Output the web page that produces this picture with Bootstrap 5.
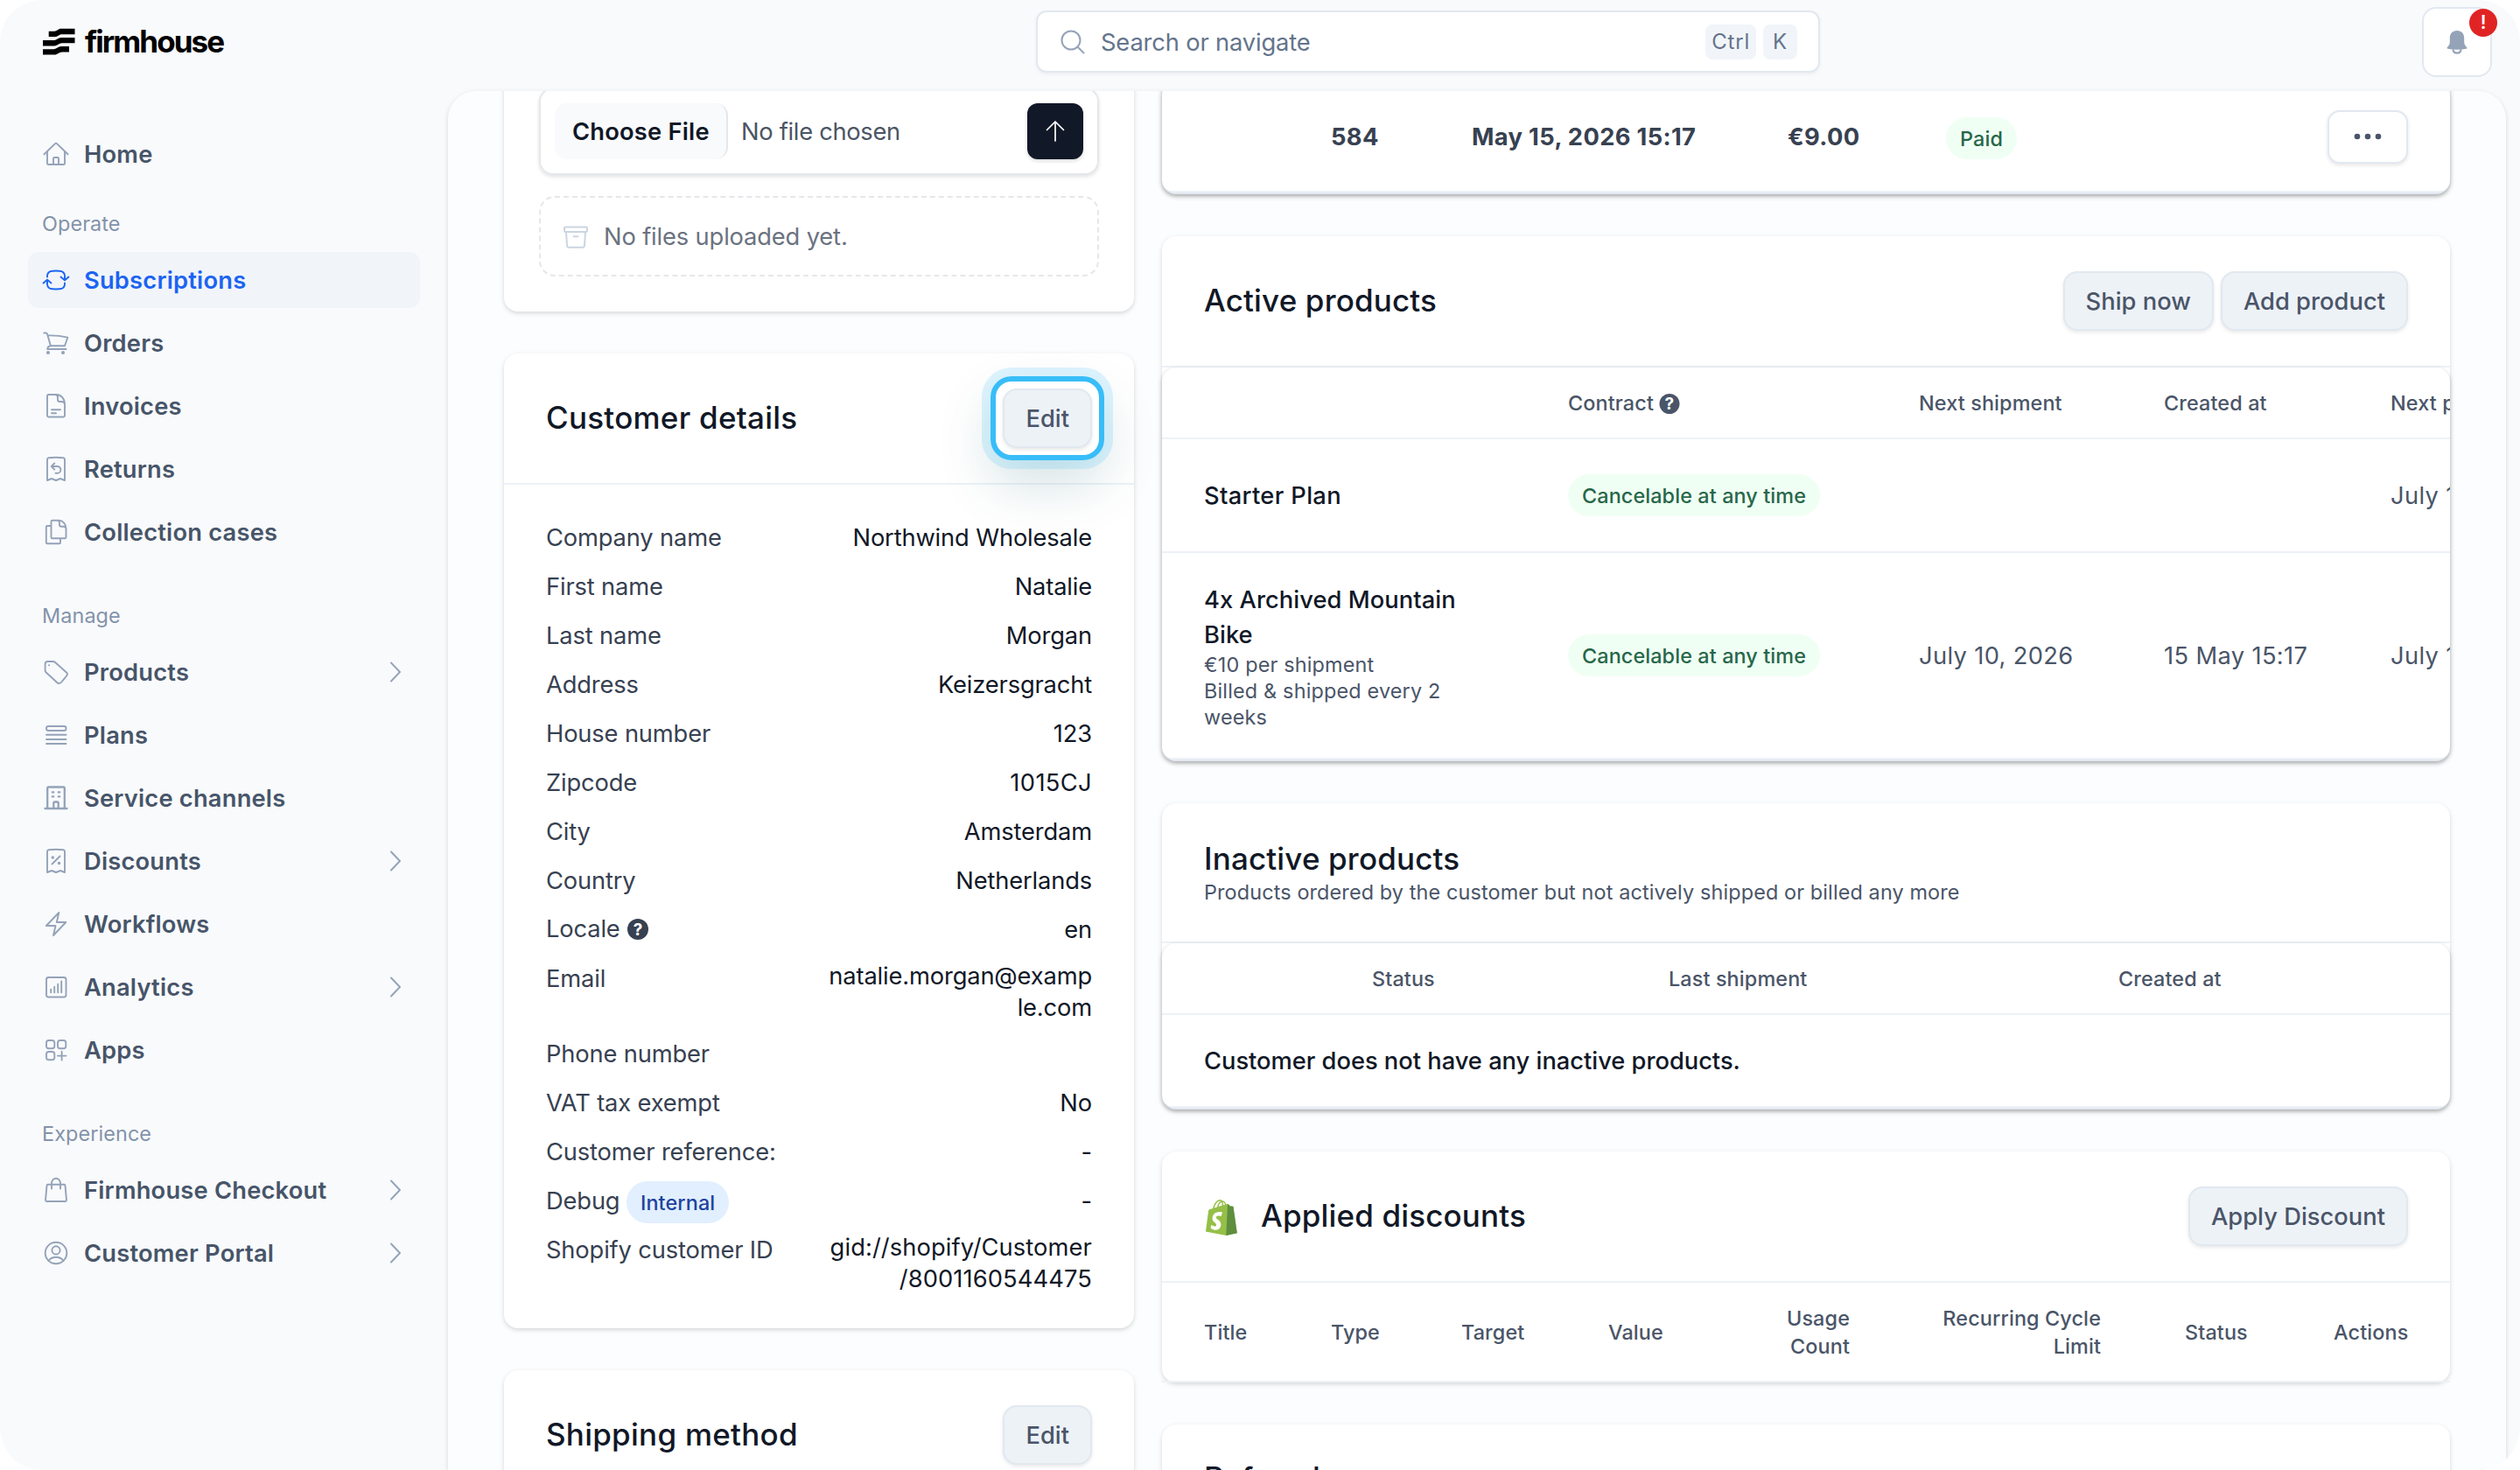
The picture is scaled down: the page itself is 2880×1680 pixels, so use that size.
<!DOCTYPE html>
<html lang="en">
<head>
<meta charset="utf-8">
<meta name="viewport" content="width=device-width, initial-scale=1">
<title>Firmhouse - Subscription</title>
<link rel="stylesheet" href="https://cdn.jsdelivr.net/npm/bootstrap@5.3.0/dist/css/bootstrap.min.css">
<style>
  body { font-family: Inter, "Liberation Sans", sans-serif; font-size: 27.3px; line-height: 40px; letter-spacing: -.15px; color: #111827; background: #fff; overflow: hidden; }
  .app-window { width: 2880px; height: 1680px; border-radius: 48px; background: #f9fafc; }

  .topbar { height: 104px; }
  .brand { width: 512px; padding: 32px 0 0 49px; gap: 11px; }
  .brand-name { font-size: 35px; font-weight: 700; line-height: 30px; letter-spacing: -1.95px; color: #000; }
  .search-box { width: 896px; height: 71px; margin: 12px 0 0 672px; padding: 0 24px 0 26px; border: 2px solid #e2e8f0; border-radius: 12px; background: #fff; color: #64748b; box-shadow: 0 2px 4px rgba(0,0,0,.05); }
  .search-hint { padding: 2px 0 0 18px; }
  .key-cap { height: 40px; border-radius: 8px; background: #f1f5f9; font-size: 24px; padding: 0 7px; letter-spacing: .8px; line-height: 40px; }
  .key-cap.single { padding: 0 11px; }
  .bell-btn { width: 80px; height: 80px; margin: 8px 32px 0 0; border: 2px solid #e2e8f0; border-radius: 16px; background: #fff; }
  .alert-dot { top: 0; right: -8px; width: 32px; height: 32px; border-radius: 50%; background: #e02424; color: #fff; font-size: 21px; font-weight: 600; line-height: 32px; letter-spacing: 0; }

  .side-menu { width: 512px; padding: 40px 32px 0; }
  .side-link { height: 64px; margin-bottom: 8px; padding: 2px 22px 0 16px; border-radius: 12px; color: #475569; font-weight: 600; letter-spacing: .2px; gap: 16px; }
  .side-link.active { background: #f1f5fa; color: #1c64f2; }
  .side-link svg { fill: none; stroke: #94a3b8; stroke-width: 1.9; stroke-linecap: round; stroke-linejoin: round; flex: none; margin-top: -2px; }
  .side-link.active svg { stroke: #1c64f2; }
  .side-label { font-size: 23.4px; line-height: 32px; letter-spacing: .1px; color: #8393aa; padding-left: 16px; margin: 48px 0 16px; }
  .side-label.first { margin-top: 32px; }

  .page-panel { width: 2352px; height: 1576px; border-radius: 32px 32px 0 0; background: #fcfdfe; box-shadow: 0 2px 6px rgba(0,0,0,.1), 0 2px 4px rgba(0,0,0,.05); }
  .scrolled { margin-top: -44px; padding: 0 64px; gap: 32px; }
  .col-side { width: 720px; }
  .col-main { width: 1472px; }

  .panel-card { background: #fff; border-radius: 16px; margin-bottom: 48px; box-shadow: 0 2px 6px rgba(0,0,0,.1), 0 2px 4px rgba(0,0,0,.06); }
  .files-card { padding: 40px; }
  .panel-head { padding: 40px 48px; border-bottom: 2px solid #edf2f7; }
  .panel-title { font-size: 35px; font-weight: 500; line-height: 44px; letter-spacing: .15px; margin: -1px 0 1px; color: #111827; }
  .panel-title.tall { line-height: 46px; margin: 0; }
  .col-side .panel-title { letter-spacing: .25px; }
  .panel-sub { font-size: 23.4px; line-height: 32px; letter-spacing: .13px; color: #4a5568; }
  .soft-btn { height: 68px; padding: 0 24px; border: 2px solid #e2e8f0; border-radius: 16px; background: #edf2f7; color: #4a5568; font-size: 27.3px; font-weight: 500; line-height: 66px; letter-spacing: .02px; box-shadow: 0 2px 4px rgba(0,0,0,.09); }

  .file-row { height: 100px; padding: 16px; border: 2px solid #e5e7eb; border-radius: 16px; box-shadow: 0 2px 4px rgba(0,0,0,.12); }
  .choose-btn { height: 64px; width: 198px; padding-left: 20px; border-right: 2px solid #e5e7eb; border-radius: 14px; background: #f9fafc; font-weight: 600; line-height: 66px; letter-spacing: .2px; }
  .file-name { padding: 2px 0 0 15px; color: #4b5563; letter-spacing: -.3px; }
  .upload-btn { width: 64px; height: 64px; border-radius: 12px; background: #111827; box-shadow: 0 2px 4px rgba(0,0,0,.15); }
  .empty-box { height: 92px; margin-top: 24px; padding: 2px 0 0 26px; border: 2px dashed #e5e7eb; border-radius: 18px; color: #6b7280; gap: 18px; }

  .spotlight::after { content: ""; position: absolute; inset: -14px; border: 6px solid #38bdf8; border-radius: 24px; box-shadow: 0 0 0 10px rgba(56,189,248,.17), 0 28px 60px rgba(12,90,100,.17); z-index: 2; }

  .detail-list { padding: 40px 48px; margin: 0; }
  .detail-row { margin-bottom: 16px; line-height: 42px; height: 40px; }
  .detail-row.double { height: 70px; }
  .detail-row:last-child { margin-bottom: 0; }
  .detail-row dt { font-weight: 400; color: #374151; white-space: nowrap; height: 40px; }
  .detail-row dd { margin: 0; text-align: right; }
  .detail-row.double dd { line-height: 36px; width: 304px; }
  .tight { letter-spacing: .1px; }
  .num { letter-spacing: .35px; }
  .tag { display: inline-block; height: 48px; padding: 0 16px; border-radius: 24px; font-size: 23.4px; font-weight: 500; line-height: 49px; letter-spacing: .1px; }
  .tag-info { background: #e1effe; color: #1e429f; margin-top: -2px; padding: 0 15.500px; }
  .tag-ok { background: #f0fff4; color: #276749; }
  .row-plan .tag-ok, .row-bike .tag-ok { margin-top: -2px; }
  .tag-paid { margin-top: 2px; }

  .inner-sheet { border-radius: 16px; border-bottom: 2px solid #e2e8f0; background: #fff; overflow: hidden; box-shadow: 0 2px 6px rgba(0,0,0,.12), 0 2px 4px rgba(0,0,0,.12); }
  .orders-card { padding-top: 34px; }
  .grid-sheet.table { table-layout: fixed; border-collapse: separate; border-spacing: 0; margin: 0; color: #4a5568; --bs-table-bg: transparent; }
  .grid-sheet.table > :not(caption) > * > * { padding: 2px 48px 0; border-width: 0 0 2px; border-color: #edf2f7; vertical-align: middle; color: inherit; background: none; }
  .grid-sheet.table > :not(caption) > * > .strong-name, .strong-name { color: #111827; font-weight: 500; letter-spacing: .05px; }
  .grid-sheet.table > :not(caption) > * > .plan-name { letter-spacing: .35px; }
  .grid-sheet.table > :not(caption) > * > .none-text { letter-spacing: -.02px; }
  .grid-sheet th { font-size: 23.4px; font-weight: 500; line-height: 32px; letter-spacing: .12px; height: 82px; }
  .grid-sheet .row-a { height: 126px; font-weight: 700; color: #374151; letter-spacing: .35px; }
  .grid-sheet .row-plan { height: 130px; }
  .grid-sheet .row-bike { height: 236px; }
  .grid-sheet .row-none { height: 106px; }
  .grid-sheet .row-disc th { height: 114px; }
  .fine { font-size: 23.4px; line-height: 30px; letter-spacing: .18px; margin-top: -1px; }
  .dots-btn { width: 92px; height: 61px; border: 2px solid #e2e8f0; border-radius: 14px; box-shadow: 0 2px 4px rgba(0,0,0,.1); background: #fff; margin-top: -2px; }
  .shop-logo { margin: 3px 27px 0 2px; }
  .th-help { gap: 6px; }
  .c145{width:145px}.c161{width:161px}.c361{width:361px}.c181{width:181px}.c300{width:300px}
  .c416{width:416px}.c401{width:401px}.c280{width:280px}.c259{width:259px}
  .c192{width:192px}.c339{width:339px}.c514{width:514px}
  .c149{width:149px}.c168{width:168px}.c196{width:196px}.c176{width:176px}.c287{width:287px}.c170{width:170px}
  .q-mark { font: 700 19px Inter, sans-serif; fill: #fff; }
</style>
<script src="https://cdn.jsdelivr.net/npm/bootstrap@5.3.0/dist/js/bootstrap.bundle.min.js"></script>
</head>
<body>
<div class="app-window overflow-hidden">
  <header class="topbar d-flex align-items-start">
    <div class="brand d-flex">
      <svg width="37" height="31" viewBox="0 0 37 31" fill="#000">
        <path d="M6.700 3.700H13C16.500 3.700 17 .8 21 .8H36.500V7.200H22C18 7.200 17.500 10.100 13 10.100H6.700Z"/>
        <path d="M0 14H12C16.500 14 17 10.900 21 10.900H36.500V17.300H22C18 17.300 17.500 20.400 13 20.400H0Z"/>
        <path d="M0 24.200H12C16.500 24.200 17 21.100 21 21.100H30V27.500H22C18 27.500 17.500 30.600 13 30.600H0Z"/>
      </svg>
      <span class="brand-name">firmhouse</span>
    </div>
    <div class="search-box d-flex align-items-center">
      <svg width="28" height="28" viewBox="0 0 28 28" fill="none" stroke="#94a3b8" stroke-width="2" stroke-linecap="round"><circle cx="12" cy="12" r="10.500"/><path d="M19.500 19.500L26.500 26.500"/></svg>
      <span class="search-hint flex-grow-1">Search or navigate</span>
      <span class="key-cap">Ctrl</span>
      <span class="key-cap single ms-2">K</span>
    </div>
    <div class="bell-btn ms-auto position-relative d-flex align-items-center justify-content-center">
      <svg width="26" height="28" viewBox="0 0 26 28"><path d="M13 1C7.500 1 4.800 4.800 4.800 9.500V14C4.800 17 3.300 18.600 1.700 20.200Q1 21.500 2.500 21.800Q13 23.800 23.500 21.800Q25 21.500 24.300 20.200C22.700 18.600 21.200 17 21.200 14V9.500C21.200 4.800 18.500 1 13 1Z" fill="#94a3b8"/><path d="M8.500 22.300C9 28 17 28 17.500 22.300" fill="none" stroke="#94a3b8" stroke-width="2.200"/></svg>
      <span class="alert-dot position-absolute text-center">!</span>
    </div>
  </header>

  <div class="d-flex">
    <nav class="side-menu">
      <a class="side-link d-flex align-items-center text-decoration-none mb-0"><svg width="32" height="32"><path d="M2.500 16.300L14.800 4.400Q16 3.300 17.200 4.400L29.500 16.300M6 13.200V26.700Q6 28 7.300 28H24.700Q26 28 26 26.700V13.200M13 28V21.200Q13 20 14.200 20H17.800Q19 20 19 21.200V28"/></svg>Home</a>
      <div class="side-label first">Operate</div>
      <a class="side-link active d-flex align-items-center text-decoration-none"><svg width="32" height="32"><path d="M6 12.500V11Q6.500 6 12 5.700Q16 5.400 20 5.700Q25.500 6 26 11V16.200M26 19.500V21Q25.500 26 20 26.300Q16 26.600 12 26.300Q6.500 26 6 21V15.800M1.600 19.500L6 15.600L10.500 19.500M21.500 12.500L26 16.400L30.400 12.500"/></svg>Subscriptions</a>
      <a class="side-link d-flex align-items-center text-decoration-none"><svg width="32" height="32"><path d="M2.300 4.500H4.300Q5.700 4.500 6.100 5.900L9.900 19.200H26L29.300 9.700Q18 7 6.800 7.400M9.900 19.200Q6.500 19.500 6.200 23H27.500"/><circle cx="7" cy="27" r="1.100" fill="#94a3b8"/><circle cx="24" cy="27" r="1.100" fill="#94a3b8"/></svg>Orders</a>
      <a class="side-link d-flex align-items-center text-decoration-none"><svg width="32" height="32"><path d="M17 3H7.500Q6 3 6 4.500V27Q6 28.500 7.500 28.500H24.500Q26 28.500 26 27V14C26 7.500 22 3 16 3M15.500 3Q18 3.500 18 6.500V8.700Q18 11 20.300 11H22.500Q25.500 11 26 14M11 20.200H21M11 24.200H16"/></svg>Invoices</a>
      <a class="side-link d-flex align-items-center text-decoration-none"><svg width="32" height="32"><path d="M6 29V5Q6 3.500 7.500 3.200Q16 2.300 24.500 3.200Q26 3.500 26 5V29L21 27L16 29L11 27ZM14.200 9.500L10.700 13L14.200 16.500M10.700 13H17.500A3.900 3.900 0 0 1 17.500 20.800H15.500"/></svg>Returns</a>
      <a class="side-link d-flex align-items-center text-decoration-none"><svg width="32" height="32"><path d="M10.500 9H6.300Q4.800 9 4.800 10.500V28Q4.800 29.300 6.300 29.300H19.700Q21 29.300 21 28V23.300M19 2.800H12Q10.500 2.800 10.500 4.300V22Q10.500 23.300 12 23.300H26Q27.500 23.300 27.500 22V12C27.500 7 24 2.800 19 2.800M18.500 2.900Q20 3.800 20 6V7.700Q20 9.700 22 9.700H24.500Q27 9.700 27.500 12"/></svg>Collection cases</a>
      <div class="side-label">Manage</div>
      <a class="side-link d-flex align-items-center text-decoration-none"><svg width="32" height="32"><path d="M6.500 4H12.500Q14 4 15.100 5L28.200 16.700Q29.800 18.200 28.400 20L23 26.700Q20.500 30 18 28.700L4.700 16.500Q3.600 15.500 3.600 14V7Q3.600 4 6.500 4ZM8 8.300H8.100"/></svg><span class="flex-grow-1">Products</span><svg width="12" height="24"><path d="M1 1.500L11 12L1 22.500"/></svg></a>
      <a class="side-link d-flex align-items-center text-decoration-none"><svg width="32" height="32"><rect x="5" y="6" width="22.500" height="5" rx="2.300"/><path d="M5 15.800H27.500M5 21H27.500M5 26H27.500"/></svg>Plans</a>
      <a class="side-link d-flex align-items-center text-decoration-none"><svg width="32" height="32"><path stroke-width="2.300" d="M3.500 28H28.500M6.200 28V4.500Q6.200 3.500 7.500 3.500H24.500Q25.800 3.500 25.800 4.500V28M13.300 28V21.500Q13.300 20.500 14.300 20.500H17.700Q18.700 20.500 18.700 21.500V28M11.800 9.400H13.200M18.800 9.400H20.200M11.800 14.400H13.200M18.800 14.400H20.200"/></svg>Service channels</a>
      <a class="side-link d-flex align-items-center text-decoration-none"><svg width="32" height="32"><path d="M6 29V5Q6 3.500 7.500 3.200Q16 2.300 24.500 3.200Q26 3.500 26 5V29L21 27L16 29L11 27ZM20.500 10.500L11.500 19.500"/><circle cx="12.300" cy="12" r=".8" fill="#94a3b8"/><circle cx="19.500" cy="18.500" r=".8" fill="#94a3b8"/></svg><span class="flex-grow-1">Discounts</span><svg width="12" height="24"><path d="M1 1.500L11 12L1 22.500"/></svg></a>
      <a class="side-link d-flex align-items-center text-decoration-none"><svg width="32" height="32"><path d="M19.300 3L4.800 18H15.500L13 29L27.300 14H16.800Z"/></svg>Workflows</a>
      <a class="side-link d-flex align-items-center text-decoration-none"><svg width="32" height="32"><rect x="5" y="5" width="22.500" height="22.500" rx="2.500"/><path d="M10.200 22.300V18.700M14.200 22.300V15.700M18.200 22.300V12.700M22.200 22.300V9.500"/></svg><span class="flex-grow-1">Analytics</span><svg width="12" height="24"><path d="M1 1.500L11 12L1 22.500"/></svg></a>
      <a class="side-link d-flex align-items-center text-decoration-none"><svg width="32" height="32"><rect x="5" y="5" width="9.300" height="9.300" rx="2.800"/><rect x="18" y="5" width="9.300" height="9.300" rx="2.800"/><rect x="5" y="18" width="9.300" height="9.300" rx="2.800"/><path d="M22.600 17.800V27.500M17.800 22.600H27.500"/></svg>Apps</a>
      <div class="side-label">Experience</div>
      <a class="side-link d-flex align-items-center text-decoration-none"><svg width="32" height="32"><path d="M6.600 9.800H25.400Q26.400 9.800 26.500 10.800L28 27.500Q28 29 26.500 29H5.500Q4 29 4 27.500L5.500 10.800Q5.600 9.800 6.600 9.800ZM11 14.500V8A5 5.200 0 0 1 21 8V14.500"/></svg><span class="flex-grow-1">Firmhouse Checkout</span><svg width="12" height="24"><path d="M1 1.500L11 12L1 22.500"/></svg></a>
      <a class="side-link d-flex align-items-center text-decoration-none"><svg width="32" height="32"><circle cx="16" cy="16" r="12.300"/><circle cx="16" cy="12.900" r="4.600"/><path d="M7.500 24.800Q10.500 20.800 16 20.800Q21.500 20.800 24.500 24.800"/></svg><span class="flex-grow-1">Customer Portal</span><svg width="12" height="24"><path d="M1 1.500L11 12L1 22.500"/></svg></a>
    </nav>

    <main class="page-panel overflow-hidden">
      <div class="scrolled d-flex align-items-start">
        <div class="col-side">
          <section class="panel-card files-card">
            <div class="file-row d-flex align-items-center">
              <span class="choose-btn">Choose File</span>
              <span class="file-name flex-grow-1">No file chosen</span>
              <span class="upload-btn d-flex align-items-center justify-content-center"><svg width="24" height="26" viewBox="0 0 24 26" fill="none" stroke="#fff" stroke-width="1.700" stroke-linecap="round" stroke-linejoin="round"><path d="M12 24V2.500M2.500 11.500L12 2L21.500 11.500"/></svg></span>
            </div>
            <div class="empty-box d-flex align-items-center">
              <svg width="28" height="26" viewBox="0 0 28 26" fill="none" stroke="#cbd5e1" stroke-width="2" stroke-linecap="round" stroke-linejoin="round"><rect x="1" y="1.500" width="26" height="5.500" rx="1.200"/><path d="M3 7L4 22.500Q4.200 24.800 6.500 24.800H21.500Q23.800 24.800 24 22.500L25 7M11.500 12.200H16.500"/></svg>
              <span>No files uploaded yet.</span>
            </div>
          </section>

          <section class="panel-card">
            <div class="panel-head d-flex align-items-center justify-content-between">
              <h2 class="panel-title">Customer details</h2>
              <span class="spotlight position-relative d-flex"><span class="soft-btn">Edit</span></span>
            </div>
            <dl class="detail-list">
              <div class="detail-row d-flex justify-content-between"><dt>Company name</dt><dd>Northwind Wholesale</dd></div>
              <div class="detail-row d-flex justify-content-between"><dt>First name</dt><dd>Natalie</dd></div>
              <div class="detail-row d-flex justify-content-between"><dt>Last name</dt><dd>Morgan</dd></div>
              <div class="detail-row d-flex justify-content-between"><dt>Address</dt><dd>Keizersgracht</dd></div>
              <div class="detail-row d-flex justify-content-between"><dt>House number</dt><dd>123</dd></div>
              <div class="detail-row d-flex justify-content-between"><dt>Zipcode</dt><dd class="num">1015CJ</dd></div>
              <div class="detail-row d-flex justify-content-between"><dt>City</dt><dd>Amsterdam</dd></div>
              <div class="detail-row d-flex justify-content-between"><dt>Country</dt><dd>Netherlands</dd></div>
              <div class="detail-row d-flex justify-content-between"><dt class="d-flex align-items-center gap-2">Locale <svg width="24" height="24"><circle cx="12" cy="12" r="12" fill="#374151"/><text x="12" y="19" text-anchor="middle" class="q-mark">?</text></svg></dt><dd>en</dd></div>
              <div class="detail-row double d-flex justify-content-between"><dt>Email</dt><dd>natalie.morgan@examp<br>le.com</dd></div>
              <div class="detail-row d-flex justify-content-between"><dt>Phone number</dt><dd></dd></div>
              <div class="detail-row d-flex justify-content-between"><dt>VAT tax exempt</dt><dd>No</dd></div>
              <div class="detail-row d-flex justify-content-between"><dt>Customer reference:</dt><dd>-</dd></div>
              <div class="detail-row d-flex justify-content-between"><dt class="d-flex gap-2">Debug <span class="tag tag-info">Internal</span></dt><dd>-</dd></div>
              <div class="detail-row double d-flex justify-content-between"><dt>Shopify customer ID</dt><dd class="tight">gid://shopify/Customer<br>/8001160544475</dd></div>
            </dl>
          </section>

          <section class="panel-card">
            <div class="panel-head d-flex align-items-center justify-content-between">
              <h2 class="panel-title">Shipping method</h2>
              <span class="soft-btn">Edit</span>
            </div>
          </section>
        </div>

        <div class="col-main">
          <section class="panel-card orders-card">
            <div class="inner-sheet">
              <table class="table grid-sheet">
                <colgroup><col class="c145"><col class="c161"><col class="c361"><col class="c181"><col class="c300"><col></colgroup>
                <tr class="row-a"><td></td><td>584</td><td>May 15, 2026 15:17</td><td>€9.00</td><td><span class="tag tag-ok tag-paid align-middle">Paid</span></td>
                  <td class="text-end"><span class="dots-btn d-inline-flex align-items-center justify-content-center align-middle"><svg width="32" height="8" fill="#4a5568"><circle cx="4" cy="4" r="3.300"/><circle cx="16" cy="4" r="3.300"/><circle cx="28" cy="4" r="3.300"/></svg></span></td></tr>
              </table>
            </div>
          </section>

          <section class="panel-card">
            <div class="panel-head d-flex align-items-center justify-content-between">
              <h2 class="panel-title">Active products</h2>
              <div class="d-flex gap-2"><span class="soft-btn">Ship now</span><span class="soft-btn">Add product</span></div>
            </div>
            <div class="inner-sheet">
              <table class="table grid-sheet">
                <colgroup><col class="c416"><col class="c401"><col class="c280"><col class="c259"><col></colgroup>
                <thead><tr><th></th><th><span class="th-help d-flex align-items-center">Contract <svg width="24" height="24"><circle cx="12" cy="12.500" r="11.500" fill="#4a5568"/><text x="12" y="19.300" text-anchor="middle" class="q-mark">?</text></svg></span></th><th>Next shipment</th><th>Created at</th><th class="text-nowrap">Next payment</th></tr></thead>
                <tbody>
                  <tr class="row-plan"><td class="strong-name plan-name">Starter Plan</td><td><span class="tag tag-ok align-middle">Cancelable at any time</span></td><td></td><td></td><td class="text-nowrap num">July 10, 2026</td></tr>
                  <tr class="row-bike"><td><div class="strong-name">4x Archived Mountain<br>Bike</div><div class="fine">€10 per shipment<br>Billed &amp; shipped every 2<br>weeks</div></td><td><span class="tag tag-ok align-middle">Cancelable at any time</span></td><td class="text-nowrap num">July 10, 2026</td><td class="text-nowrap num">15 May 15:17</td><td class="text-nowrap num">July 10, 2026</td></tr>
                </tbody>
              </table>
            </div>
          </section>

          <section class="panel-card">
            <div class="panel-head">
              <h2 class="panel-title tall">Inactive products</h2>
              <div class="panel-sub">Products ordered by the customer but not actively shipped or billed any more</div>
            </div>
            <div class="inner-sheet">
              <table class="table grid-sheet">
                <colgroup><col class="c192"><col class="c339"><col class="c514"><col></colgroup>
                <thead><tr><th></th><th>Status</th><th>Last shipment</th><th>Created at</th></tr></thead>
                <tbody><tr class="row-none"><td colspan="4" class="strong-name none-text">Customer does not have any inactive products.</td></tr></tbody>
              </table>
            </div>
          </section>

          <section class="panel-card">
            <div class="panel-head d-flex align-items-center justify-content-between">
              <div class="d-flex align-items-center">
                <svg class="shop-logo" width="36" height="41" viewBox="0 0 256 292">
                  <path fill="#95BF47" fill-rule="evenodd" d="M223.774 57.340c-.201-1.460-1.480-2.268-2.537-2.357-1.055-.088-23.383-1.743-23.383-1.743s-15.507-15.395-17.209-17.099c-1.703-1.703-5.029-1.185-6.320-.805-.190.056-3.388 1.043-8.678 2.680-5.180-14.906-14.322-28.604-30.405-28.604-.444 0-.901.018-1.358.044C129.310 3.407 123.644.779 118.750.779c-37.465 0-55.364 46.835-60.976 70.635-14.558 4.511-24.900 7.718-26.221 8.133-8.126 2.549-8.383 2.805-9.450 10.462C21.300 95.806.038 260.235.038 260.235l165.678 31.042 89.770-19.420S223.973 58.800 223.775 57.340zM156.490 40.848l-14.019 4.339c.005-.988.010-1.960.010-3.023 0-9.264-1.286-16.723-3.349-22.636 8.287 1.040 13.806 10.469 17.358 21.320zM128.852 21.365c2.304 5.773 3.802 14.058 3.802 25.238 0 .572-.005 1.095-.010 1.624-9.117 2.824-19.024 5.890-28.953 8.966 5.575-21.516 16.025-31.908 25.161-35.828zM117.721 10.828c1.617 0 3.246.549 4.805 1.622-12.007 5.650-24.877 19.880-30.312 48.297l-22.886 7.088C75.694 46.160 90.810 10.828 117.720 10.828z"/>
                  <path fill="#5E8E3E" d="M221.237 54.983c-1.055-.088-23.383-1.743-23.383-1.743s-15.507-15.395-17.209-17.099c-.637-.634-1.496-.959-2.394-1.099l-12.527 256.233 89.762-19.418S223.972 58.800 223.774 57.340c-.201-1.460-1.480-2.268-2.537-2.357"/>
                  <path fill="#FFF" d="M135.242 104.585l-11.069 32.926s-9.698-5.176-21.586-5.176c-17.428 0-18.305 10.937-18.305 13.693 0 15.038 39.200 20.800 39.200 56.024 0 27.713-17.577 45.558-41.277 45.558-28.440 0-42.984-17.700-42.984-17.700l7.615-25.160s14.950 12.835 27.565 12.835c8.243 0 11.596-6.490 11.596-11.232 0-19.616-32.160-20.491-32.160-52.724 0-27.129 19.472-53.382 58.778-53.382 15.145 0 22.627 4.338 22.627 4.338"/>
                </svg>
                <h2 class="panel-title">Applied discounts</h2>
              </div>
              <span class="soft-btn">Apply Discount</span>
            </div>
            <table class="table grid-sheet">
              <colgroup><col class="c145"><col class="c149"><col class="c168"><col class="c196"><col class="c176"><col class="c287"><col class="c170"><col></colgroup>
              <tr class="row-disc"><th>Title</th><th>Type</th><th>Target</th><th>Value</th><th class="text-end">Usage Count</th><th class="text-end">Recurring Cycle Limit</th><th>Status</th><th class="text-end">Actions</th></tr>
            </table>
          </section>

          <section class="panel-card">
            <div class="panel-head"><h2 class="panel-title">Referrals</h2></div>
          </section>
        </div>
      </div>
    </main>
  </div>
</div>
</body>
</html>
